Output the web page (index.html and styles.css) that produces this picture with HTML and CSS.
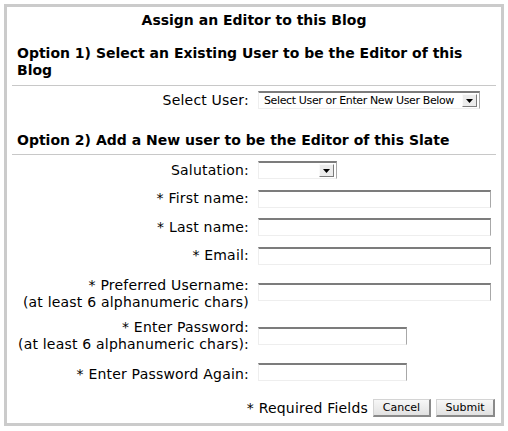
FILE: index.html
```html
<!DOCTYPE html>
<html>
<head>
<meta charset="utf-8">
<link rel="stylesheet" href="styles.css">
</head>
<body>
<div class="panel">
  <h1 class="title">Assign an Editor to this Blog</h1>

  <h2 class="option">Option 1) Select an Existing User to be the Editor of this Blog</h2>
  <div class="rule"></div>
  <div class="form-grid single">
    <label class="lbl">Select User:</label>
    <div class="ctl">
      <span class="select user-select">
        <span class="select-text">Select User or Enter New User Below</span>
        <span class="select-arrow"><svg width="7" height="4" viewBox="0 0 7 4"><path d="M0 0H7L3.5 4Z" fill="#000"/></svg></span>
      </span>
    </div>
  </div>

  <h2 class="option option2">Option 2) Add a New user to be the Editor of this Slate</h2>
  <div class="rule rule2"></div>

  <div class="form-grid">
    <label class="lbl">Salutation:</label>
    <div class="ctl">
      <span class="select salut-select">
        <span class="select-text"></span>
        <span class="select-arrow"><svg width="7" height="4" viewBox="0 0 7 4"><path d="M0 0H7L3.5 4Z" fill="#000"/></svg></span>
      </span>
    </div>

    <label class="lbl">* First name:</label>
    <div class="ctl"><input class="field wide" type="text"></div>

    <label class="lbl">* Last name:</label>
    <div class="ctl"><input class="field wide" type="text"></div>

    <label class="lbl">* Email:</label>
    <div class="ctl"><input class="field wide" type="text"></div>

    <label class="lbl two low">* Preferred Username:<br>(at least 6 alphanumeric chars)</label>
    <div class="ctl"><input class="field wide" type="text"></div>

    <label class="lbl two">* Enter Password:<br>(at least 6 alphanumeric chars):</label>
    <div class="ctl"><input class="field short" type="password"></div>

    <label class="lbl low">* Enter Password Again:</label>
    <div class="ctl"><input class="field short" type="password"></div>
  </div>

  <div class="actions">
    <span class="req">* Required Fields</span>
    <button class="btn cancel" type="button">Cancel</button>
    <button class="btn submit" type="button">Submit</button>
  </div>
</div>
</body>
</html>
```

FILE: styles.css
```css
* { box-sizing: border-box; }

body {
  margin: 0;
  background: #fff;
  font-family: "DejaVu Sans", Verdana, sans-serif;
  font-size: 14px;
  color: #000;
}

.panel {
  margin: 4px;
  width: 500px;
  height: 422px;
  border: 3px solid #cbcbcb;
  padding: 5px 5px 0 5px;
}

.title {
  margin: 0;
  font-size: 14px;
  line-height: 16px;
  font-weight: bold;
  text-align: center;
}

.option {
  margin: 17px 0 0 0;
  padding-left: 5px;
  font-size: 14px;
  line-height: 17px;
  font-weight: bold;
}

.option2 {
  margin-top: 18px;
}

.rule {
  height: 1px;
  background: #c8c8c8;
  margin-top: 6px;
}

.rule2 {
  margin-top: 5px;
}

.form-grid {
  display: grid;
  grid-template-columns: 237px 1fr;
  column-gap: 9px;
  padding-top: 1px;
}

.form-grid.single {
  padding-top: 0;
}

.lbl {
  text-align: right;
  line-height: 17px;
  padding: 5px 0;
  display: flex;
  align-items: center;
  justify-content: flex-end;
  letter-spacing: 0.2px;
}

.lbl.low {
  padding: 7px 0 3px;
}

.ctl {
  display: flex;
  align-items: center;
  padding: 5.25px 0;
}

.single .ctl {
  padding: 5px 0;
}

.field {
  height: 18px;
  border-style: solid;
  border-width: 2px 1px 1px 1px;
  border-color: #7c7c7c #a8a8a8 #eeeeee #eeeeee;
  background: #fff;
  padding: 0 2px;
  font: 11px "DejaVu Sans", sans-serif;
  margin: 0;
}

.field.wide { width: 233px; }
.field.short { width: 149px; }

.select {
  display: flex;
  align-items: center;
  height: 18px;
  border-style: solid;
  border-width: 2px 1px 1px 1px;
  border-color: #7c7c7c #a8a8a8 #eeeeee #eeeeee;
  background: #fff;
  padding-right: 2px;
}

.user-select { width: 222px; }
.salut-select { width: 79px; }

.select-text {
  flex: 1;
  font-size: 11px;
  padding-left: 5px;
  white-space: nowrap;
  overflow: hidden;
  color: #000;
  letter-spacing: -0.37px;
}

.select-arrow {
  width: 15px;
  height: 13px;
  display: flex;
  align-items: center;
  justify-content: center;
  background: #ececec;
  border-style: solid;
  border-width: 1px;
  border-color: #fafafa #7c7c7c #7c7c7c #fafafa;
}

.actions {
  display: flex;
  justify-content: flex-end;
  align-items: center;
  gap: 5px;
  padding: 12px 1px 0 0;
}

.req {
  letter-spacing: 0.2px;
}

.btn {
  height: 18px;
  margin: 0;
  padding: 0;
  font: 11px "DejaVu Sans", sans-serif;
  color: #000;
  background: linear-gradient(#f7f7f7, #e2e2e2);
  border-style: solid;
  border-width: 1px 2px 2px 1px;
  border-color: #d4d4d4 #8a8a8a #8a8a8a #d4d4d4;
}

.cancel { width: 58px; }
.submit { width: 59px; }
```
